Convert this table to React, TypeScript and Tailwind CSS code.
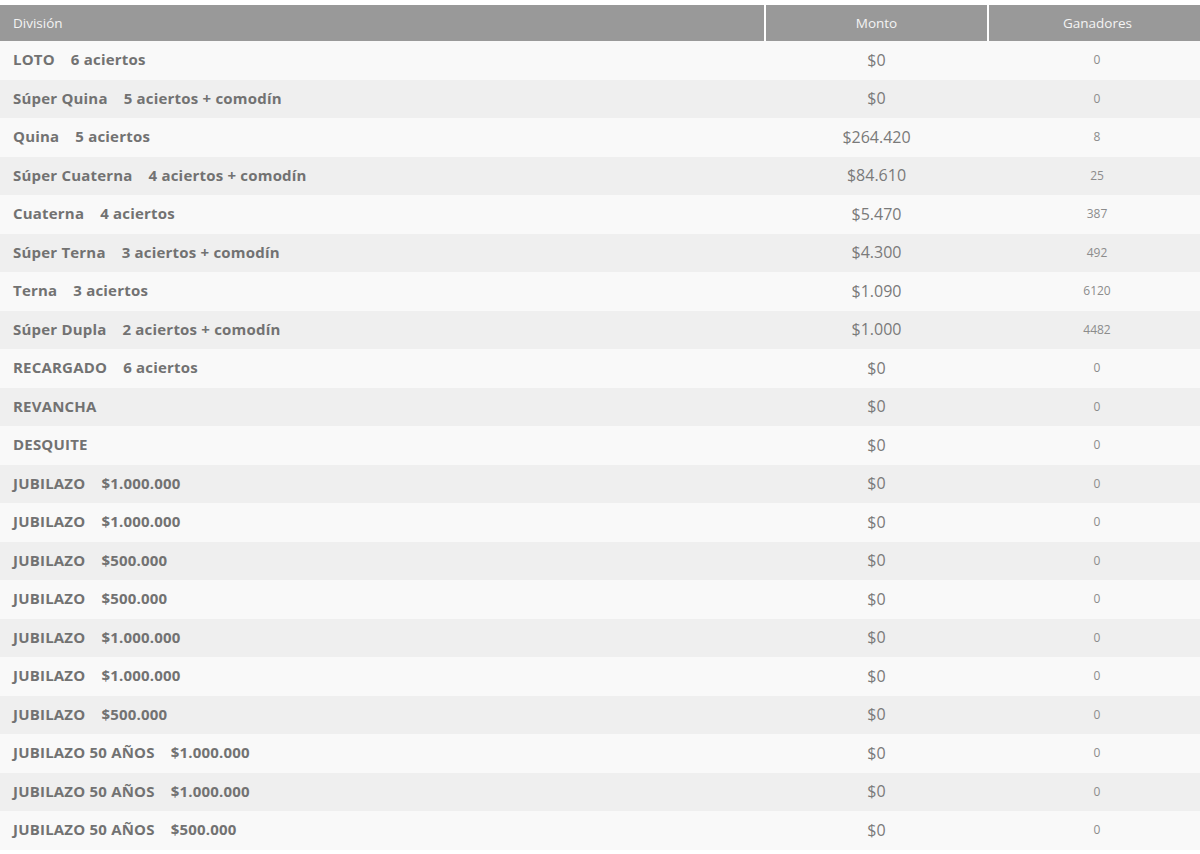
import React from "react";

type Row = { name: string; extra?: string; monto: string; ganadores: string };

const rows: Row[] = [
  { name: "LOTO", extra: "6 aciertos", monto: "$0", ganadores: "0" },
  { name: "Súper Quina", extra: "5 aciertos + comodín", monto: "$0", ganadores: "0" },
  { name: "Quina", extra: "5 aciertos", monto: "$264.420", ganadores: "8" },
  { name: "Súper Cuaterna", extra: "4 aciertos + comodín", monto: "$84.610", ganadores: "25" },
  { name: "Cuaterna", extra: "4 aciertos", monto: "$5.470", ganadores: "387" },
  { name: "Súper Terna", extra: "3 aciertos + comodín", monto: "$4.300", ganadores: "492" },
  { name: "Terna", extra: "3 aciertos", monto: "$1.090", ganadores: "6120" },
  { name: "Súper Dupla", extra: "2 aciertos + comodín", monto: "$1.000", ganadores: "4482" },
  { name: "RECARGADO", extra: "6 aciertos", monto: "$0", ganadores: "0" },
  { name: "REVANCHA", monto: "$0", ganadores: "0" },
  { name: "DESQUITE", monto: "$0", ganadores: "0" },
  { name: "JUBILAZO", extra: "$1.000.000", monto: "$0", ganadores: "0" },
  { name: "JUBILAZO", extra: "$1.000.000", monto: "$0", ganadores: "0" },
  { name: "JUBILAZO", extra: "$500.000", monto: "$0", ganadores: "0" },
  { name: "JUBILAZO", extra: "$500.000", monto: "$0", ganadores: "0" },
  { name: "JUBILAZO", extra: "$1.000.000", monto: "$0", ganadores: "0" },
  { name: "JUBILAZO", extra: "$1.000.000", monto: "$0", ganadores: "0" },
  { name: "JUBILAZO", extra: "$500.000", monto: "$0", ganadores: "0" },
  { name: "JUBILAZO 50 AÑOS", extra: "$1.000.000", monto: "$0", ganadores: "0" },
  { name: "JUBILAZO 50 AÑOS", extra: "$1.000.000", monto: "$0", ganadores: "0" },
  { name: "JUBILAZO 50 AÑOS", extra: "$500.000", monto: "$0", ganadores: "0" },
];

export default function App() {
  return (
    <div className="w-[1200px] bg-white pt-[5px] font-['Open_Sans',sans-serif]">
      <table className="w-full border-collapse table-fixed">
        <colgroup>
          <col className="w-[765px]" />
          <col className="w-[223px]" />
          <col className="w-[212px]" />
        </colgroup>
        <thead>
          {/* Header */}
          <tr className="h-[36px] bg-[#999999] text-[13.5px] text-[#f4f4f4]">
            <th className="text-left font-normal px-[13px] border-r-2 border-white">División</th>
            <th className="text-center font-normal border-r-2 border-white">Monto</th>
            <th className="text-center font-normal pl-[6px]">Ganadores</th>
          </tr>
        </thead>
        <tbody>
          {rows.map((r, i) => (
            <tr key={i} className={`h-[38.5px] ${i % 2 === 0 ? "bg-[#f9f9f9]" : "bg-[#efefef]"}`}>
              <td className="px-[13px] pb-[2px] text-[15px] font-bold tracking-[0.2px] text-[#727272]">
                {r.name}
                {r.extra && <span className="ml-[16px]">{r.extra}</span>}
              </td>
              <td className="text-center pb-[1px] text-[16px] text-[#7a7a7a]">{r.monto}</td>
              <td className="text-center pl-[6px] text-[12px] text-[#8c8c8c]">{r.ganadores}</td>
            </tr>
          ))}
        </tbody>
      </table>
    </div>
  );
}
